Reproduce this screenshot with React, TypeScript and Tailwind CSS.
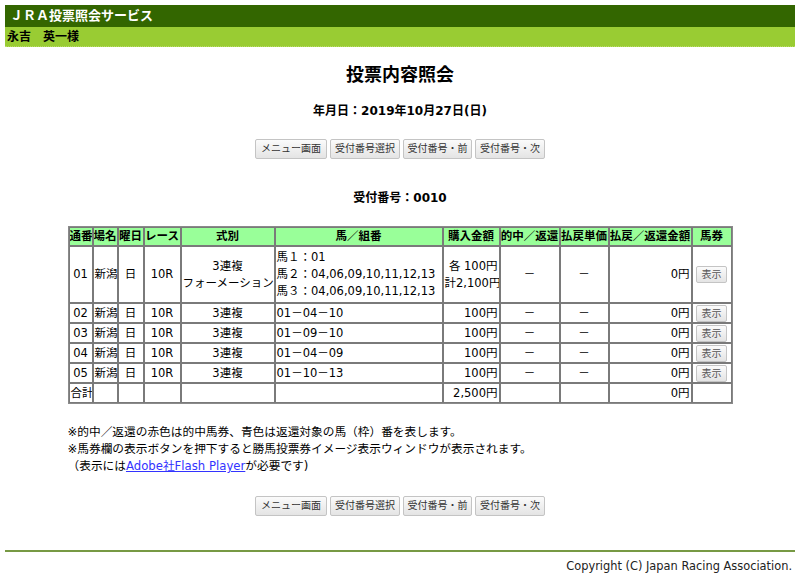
import * as React from "react";

const rows = [
  { no: "02", kumi: "01－04－10" },
  { no: "03", kumi: "01－09－10" },
  { no: "04", kumi: "01－04－09" },
  { no: "05", kumi: "01－10－13" },
];

const cell = "border border-[#7a7a7a] px-[1px] py-0 leading-[15px] whitespace-nowrap overflow-hidden";
const head = "border border-[#7a7a7a] bg-[#99ff99] px-0 py-[1px] leading-[15px] font-bold text-center whitespace-nowrap overflow-hidden";

const NavButtons = () => (
  <div className="flex justify-center gap-[3px]">
    {[
      ["メニュー画面", "w-[72px]"],
      ["受付番号選択", "w-[70px]"],
      ["受付番号・前", "w-[69px]"],
      ["受付番号・次", "w-[70px]"],
    ].map(([label, w]) => (
      <button
        key={label}
        className={`${w} h-[20px] rounded-[2px] border border-[#c4c4c4] bg-gradient-to-b from-[#fbfbfb] to-[#e4e4e4] text-[10px] leading-[18px] text-[#333]`}
      >
        {label}
      </button>
    ))}
  </div>
);

const ShowButton = () => (
  <button className="mx-auto block w-[31px] h-[17px] rounded-[2px] border border-[#c4c4c4] bg-gradient-to-b from-[#fbfbfb] to-[#e4e4e4] text-[10px] leading-[15px] text-[#555]">
    表示
  </button>
);

export default function App() {
  return (
    <div
      className="min-h-[581px] bg-white px-[5px] pt-[5px] text-black text-[12px]"
      style={{ fontFamily: '"DejaVu Sans", "Noto Sans CJK JP", sans-serif' }}
    >
      <div className="h-[22px] bg-[#336600] pl-[5px] text-[13px] font-bold leading-[22px] text-white">
        ＪＲＡ投票照会サービス
      </div>
      <div className="h-[20px] border-b border-dotted border-[#b8dd66] bg-[#99cc33] pl-[2px] pt-[1px] text-[12px] font-bold leading-[18px]">
        永吉　英一様
      </div>

      <h1 className="mt-[16px] text-center text-[18px] font-bold leading-[24px]">投票内容照会</h1>
      <div className="mt-[15px] text-center text-[12px] font-bold leading-[18px]">
        年月日：2019年10月27日(日)
      </div>
      <div className="mt-[19px]">
        <NavButtons />
      </div>
      <div className="mt-[30px] text-center text-[12px] font-bold leading-[18px]">受付番号：0010</div>

      <table className="mx-auto mt-[19px] w-[665px] table-fixed border-separate border-spacing-0 border border-[#8a8a8a] text-[11.5px]">
        <colgroup>
          <col className="w-[24px]" />
          <col className="w-[25px]" />
          <col className="w-[26px]" />
          <col className="w-[37px]" />
          <col className="w-[94px]" />
          <col className="w-[168px]" />
          <col className="w-[57px]" />
          <col className="w-[60px]" />
          <col className="w-[49px]" />
          <col className="w-[83px]" />
          <col className="w-[40px]" />
        </colgroup>
        <thead>
          <tr>
            <th className={head}>通番</th>
            <th className={head}>場名</th>
            <th className={head}>曜日</th>
            <th className={head}>レース</th>
            <th className={head}>式別</th>
            <th className={head}>馬／組番</th>
            <th className={head}>購入金額</th>
            <th className={head}>的中／返還</th>
            <th className={head}>払戻単価</th>
            <th className={head}>払戻／返還金額</th>
            <th className={head}>馬券</th>
          </tr>
        </thead>
        <tbody>
          <tr>
            <td className={`${cell} text-center`}>01</td>
            <td className={`${cell} text-left`}>新潟</td>
            <td className={`${cell} text-center`}>日</td>
            <td className={`${cell} text-center`}>10R</td>
            <td className={`${cell} text-center !leading-[17px]`}>
              3連複
              <br />
              フォーメーション
            </td>
            <td className={`${cell} text-left !leading-[17px] !py-[2px]`}>
              馬１：01
              <br />
              馬２：04,06,09,10,11,12,13
              <br />
              馬３：04,06,09,10,11,12,13
            </td>
            <td className={`${cell} text-right !leading-[17px]`}>
              各 100円
              <br />
              計2,100円
            </td>
            <td className={`${cell} text-center`}>－</td>
            <td className={`${cell} text-center`}>－</td>
            <td className={`${cell} text-right`}>0円</td>
            <td className={`${cell} text-center`}>
              <ShowButton />
            </td>
          </tr>
          {rows.map((r) => (
            <tr key={r.no}>
              <td className={`${cell} h-[20px] text-center`}>{r.no}</td>
              <td className={`${cell} h-[20px] text-left`}>新潟</td>
              <td className={`${cell} h-[20px] text-center`}>日</td>
              <td className={`${cell} h-[20px] text-center`}>10R</td>
              <td className={`${cell} h-[20px] text-center`}>3連複</td>
              <td className={`${cell} h-[20px] text-left`}>{r.kumi}</td>
              <td className={`${cell} h-[20px] text-right`}>100円</td>
              <td className={`${cell} h-[20px] text-center`}>－</td>
              <td className={`${cell} h-[20px] text-center`}>－</td>
              <td className={`${cell} h-[20px] text-right`}>0円</td>
              <td className={`${cell} h-[20px] text-center`}>
                <ShowButton />
              </td>
            </tr>
          ))}
          <tr>
            <td className={`${cell} h-[20px] text-left`}>合計</td>
            <td className={cell}></td>
            <td className={cell}></td>
            <td className={cell}></td>
            <td className={cell}></td>
            <td className={cell}></td>
            <td className={`${cell} text-right`}>2,500円</td>
            <td className={cell}></td>
            <td className={cell}></td>
            <td className={`${cell} text-right`}>0円</td>
            <td className={cell}></td>
          </tr>
        </tbody>
      </table>

      <div className="mx-auto mt-[20px] w-[665px] text-[11.7px] leading-[17px]">
        <p>※的中／返還の赤色は的中馬券、青色は返還対象の馬（枠）番を表します。</p>
        <p>※馬券欄の表示ボタンを押下すると勝馬投票券イメージ表示ウィンドウが表示されます。</p>
        <p>
          （表示には
          <a href="#" className="text-[#3333ff] underline">
            Adobe社Flash Player
          </a>
          が必要です)
        </p>
      </div>

      <div className="mt-[21px]">
        <NavButtons />
      </div>

      <div className="mt-[34px] h-[2px] bg-[#779944]" />
      <div className="mt-[6px] pr-[3px] text-right text-[11.4px] leading-[16px] text-[#222]">
        Copyright (C) Japan Racing Association.
      </div>
    </div>
  );
}
